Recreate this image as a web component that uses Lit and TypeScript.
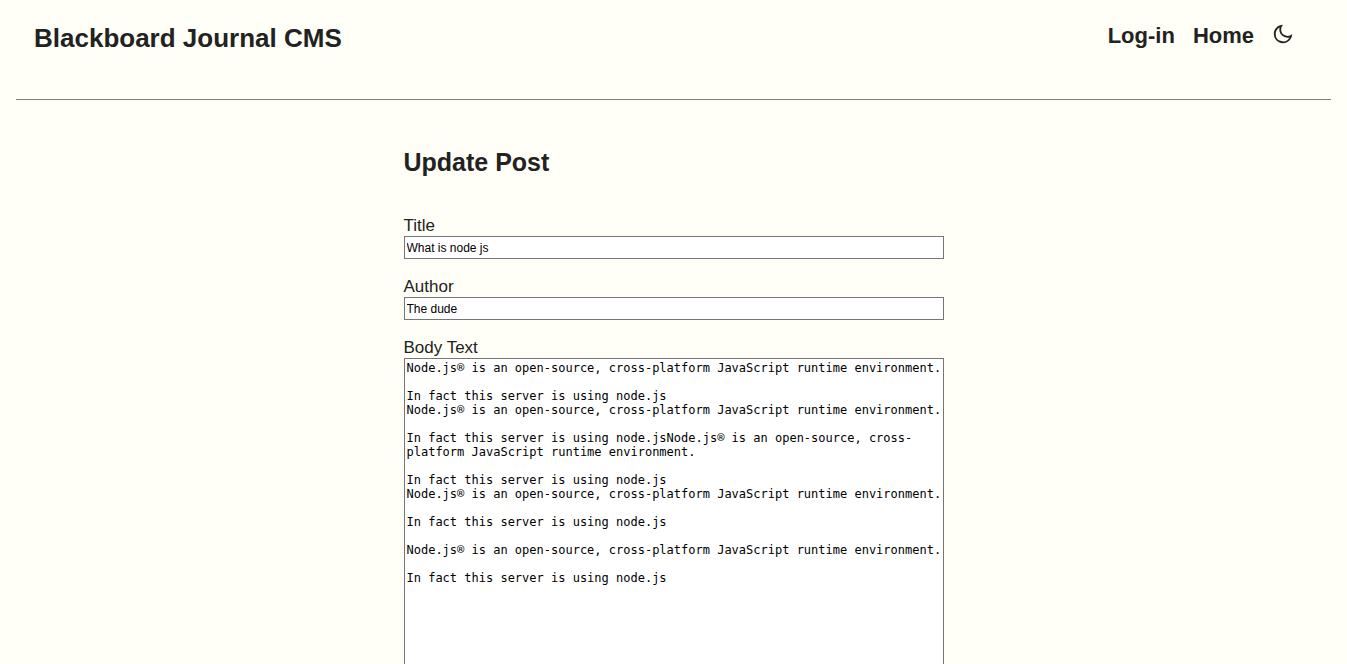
import { LitElement, html, css } from "lit";
import { customElement, state } from "lit/decorators.js";

const INTRO = "Node.js® is an open-source, cross-platform JavaScript runtime environment.";
const FACT = "In fact this server is using node.js";

const BODY = [
  INTRO,
  "",
  FACT,
  INTRO,
  "",
  FACT + INTRO,
  "",
  FACT,
  INTRO,
  "",
  FACT,
  "",
  INTRO,
  "",
  FACT,
].join("\n");

@customElement("site-header")
class SiteHeader extends LitElement {
  static styles = css`
    :host {
      display: block;
    }
    .bar {
      display: flex;
      justify-content: space-between;
      align-items: flex-start;
      padding: 23px 37px 46px 18px;
    }
    .brand {
      margin: 0;
      font-size: 26px;
      line-height: 30px;
      font-weight: 700;
    }
    .links {
      display: flex;
      align-items: flex-start;
      gap: 18px;
      line-height: 26px;
    }
    .link {
      color: inherit;
      font-size: 22px;
      font-weight: 700;
      text-decoration: none;
    }
    .theme {
      display: flex;
      padding: 0;
      border: 0;
      background: none;
      color: inherit;
      cursor: pointer;
    }
    .moon {
      width: 22px;
      height: 22px;
      fill: currentColor;
    }
    .rule {
      height: 1px;
      margin: 0;
      border: 0;
      background: #808080;
    }
  `;

  render() {
    return html`
      <header>
        <div class="bar">
          <h1 class="brand">Blackboard Journal CMS</h1>
          <nav class="links">
            <a class="link" href="#login">Log-in</a>
            <a class="link" href="#home">Home</a>
            <button class="theme" type="button" aria-label="Toggle dark mode">
              <svg class="moon" viewBox="0 0 24 24" aria-hidden="true">
                <path
                  d="M10 7a7 7 0 0 0 12 4.9v.1c0 5.523-4.477 10-10 10S2 17.523 2 12 6.477 2 12 2h.1A6.979 6.979 0 0 0 10 7zm-6 5a8 8 0 0 0 15.062 3.762A9 9 0 0 1 8.238 4.938 7.999 7.999 0 0 0 4 12z"
                />
              </svg>
            </button>
          </nav>
        </div>
        <hr class="rule" />
      </header>
    `;
  }
}

@customElement("post-form")
class PostForm extends LitElement {
  static styles = css`
    :host {
      display: block;
      max-width: 540px;
      margin: 0 auto;
    }
    .heading {
      margin: 0 0 40px;
      font-size: 25px;
      line-height: 28px;
      font-weight: 700;
    }
    .form {
      display: flex;
      flex-direction: column;
      gap: 18px;
    }
    .field {
      display: flex;
      flex-direction: column;
    }
    .label {
      font-size: 17px;
      line-height: 20px;
    }
    .box {
      box-sizing: border-box;
      width: 100%;
      margin: 0;
      border: 1px solid #767676;
      border-radius: 0;
      background: #fff;
      color: #000;
      font-size: 12px;
    }
    .line {
      height: 23px;
      padding: 0 2px;
      font-family: "Liberation Sans", Arial, sans-serif;
    }
    .area {
      display: block;
      padding: 2px 0 2px 2px;
      font-family: "DejaVu Sans Mono", monospace;
      line-height: 14px;
      resize: vertical;
    }
  `;

  @state() private heading = "What is node js";
  @state() private author = "The dude";
  @state() private body = BODY;

  render() {
    return html`
      <h2 class="heading">Update Post</h2>
      <form class="form">
        <div class="field">
          <label class="label" for="title">Title</label>
          <input class="box line" id="title" type="text" .value=${this.heading} />
        </div>
        <div class="field">
          <label class="label" for="author">Author</label>
          <input class="box line" id="author" type="text" .value=${this.author} />
        </div>
        <div class="field">
          <label class="label" for="body">Body Text</label>
          <textarea class="box area" id="body" rows="30" .value=${this.body}></textarea>
        </div>
      </form>
    `;
  }
}

@customElement("app-root")
class AppRoot extends LitElement {
  static styles = css`
    :host {
      display: block;
      box-sizing: border-box;
      min-height: 100vh;
      padding: 0 16px 48px;
      background: #fffff7;
      color: #222;
      font-family: "Liberation Sans", Arial, sans-serif;
    }
    .main {
      padding-top: 48px;
    }
  `;

  render() {
    return html`
      <site-header></site-header>
      <main class="main"><post-form></post-form></main>
    `;
  }
}
